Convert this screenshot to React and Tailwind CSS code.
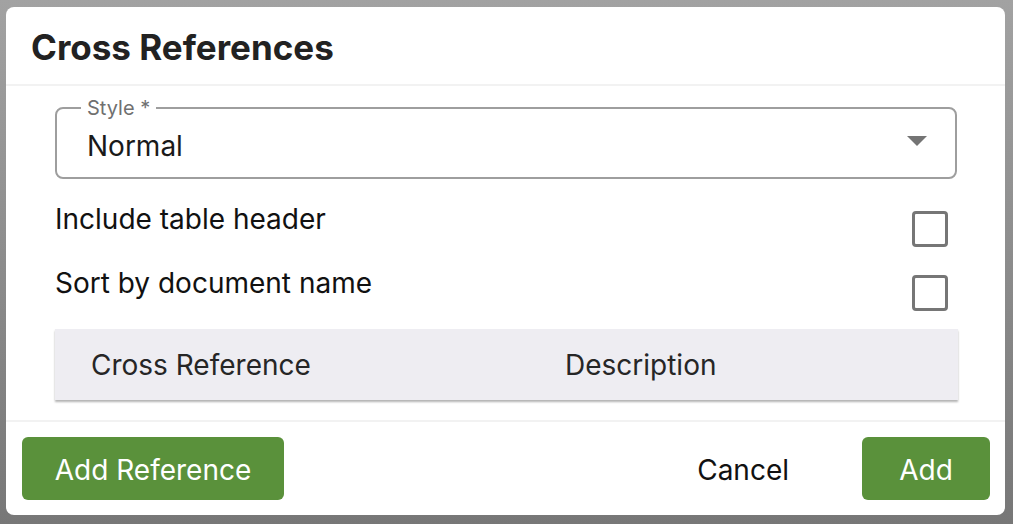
export default function App() {
  const font = { fontFamily: "Inter, 'Liberation Sans', sans-serif" };
  return (
    <div className="w-[1013px] h-[524px] bg-gradient-to-b from-[#a2a2a2] to-[#777777] pt-[7px] pl-[6px] pr-[8px] pb-[9px]" style={font}>
      <div className="bg-white rounded-[8px] h-full flex flex-col overflow-hidden">
        <div className="h-[79px] shrink-0 flex items-center pl-[25px] border-b-2 border-[#f2f2f2]">
          <h2 className="text-[35px] font-bold text-[#222222] leading-none pt-[4px]">Cross References</h2>
        </div>
        <div className="flex-1 px-[49px] pr-[48px] pt-[21px] flex flex-col">
          <div className="relative h-[72px] border-2 border-[#9e9e9e] rounded-[8px] flex items-center pl-[30px] pr-[28px]">
            <span className="absolute -top-[12px] left-[24px] bg-white px-[6px] text-[20px] leading-[22px] text-[#707070]">Style *</span>
            <span className="flex-1 text-[28px] leading-[34px] text-[#1a1a1a] pt-[6px]">Normal</span>
            <svg width="20" height="10" viewBox="0 0 20 10" className="mb-[4px]">
              <path d="M0 0 L20 0 L10 10 Z" fill="#747474" />
            </svg>
          </div>
          <div className="flex items-start justify-between mt-[24px] h-[64px]">
            <span className="text-[28px] text-[#111111] leading-[34px] mt-[-1px]">Include table header</span>
            <div className="w-[36px] h-[36px] border-[3px] border-[#767676] rounded-[4px] mr-[9px] mt-[8px]" />
          </div>
          <div className="flex items-start justify-between h-[64px]">
            <span className="text-[28px] text-[#111111] leading-[34px] mt-[-1px]">Sort by document name</span>
            <div className="w-[36px] h-[36px] border-[3px] border-[#767676] rounded-[4px] mr-[9px] mt-[8px]" />
          </div>
          <div className="h-[71px] bg-[#eeedf2] flex items-center mt-[-2px] shadow-[0_2px_2px_rgba(0,0,0,0.3)] mr-[-1px]">
            <span className="w-[510px] pl-[36px] text-[28px] text-[#262626]">Cross Reference</span>
            <span className="text-[28px] text-[#262626]">Description</span>
          </div>
        </div>
        <div className="h-[95px] shrink-0 border-t-2 border-[#f2f2f2] flex items-start pt-[15px] pl-[16px] pr-[15px]">
          <button className="h-[63px] w-[262px] bg-[#5a913b] rounded-[6px] text-white text-[28px] pt-[2px]">Add Reference</button>
          <div className="flex-1" />
          <button className="h-[63px] px-[16px] text-[28px] text-[#111111] mr-[57px] pt-[2px]">Cancel</button>
          <button className="h-[63px] w-[128px] bg-[#5a913b] rounded-[6px] text-white text-[28px] pt-[2px]">Add</button>
        </div>
      </div>
    </div>
  );
}
